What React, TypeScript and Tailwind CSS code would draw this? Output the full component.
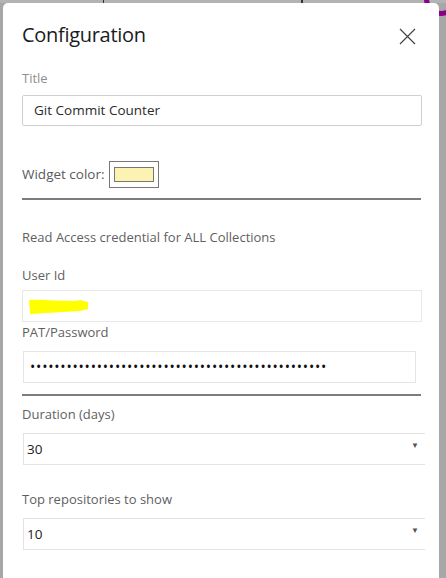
import React from 'react';

const font = { fontFamily: '"Open Sans", "Noto Sans", Arial, sans-serif' };

const Label: React.FC<{ text: string; className?: string }> = ({ text, className }) => (
  <div className={`text-[13px] leading-[18px] text-[#5f5f5f] ${className ?? ''}`}>{text}</div>
);

const SelectBox: React.FC<{ value: string; className?: string }> = ({ value, className }) => (
  <div
    className={`flex items-center justify-between h-[32px] ml-[1px] -mr-[3px] border-t border-l border-b border-[#e3e3e3] pl-[3px] pr-[6px] ${className ?? ''}`}
  >
    <span className="text-[13.5px] text-[#222]">{value}</span>
    <span className="text-[8px] text-[#555] -mt-[8px]">▼</span>
  </div>
);

export default function App() {
  return (
    <div className="relative w-[446px] h-[578px] overflow-hidden bg-[#a7a7a7] pt-[3px] pl-[3px] pr-[7px]" style={font}>
      {/* page behind */}
      <div className="absolute left-0 top-0 w-full h-[3px] bg-[#b3b3b3]" />
      <div className="absolute left-[103px] top-0 w-[1px] h-[5px] bg-[#333]" />
      <div className="absolute left-[301px] top-0 w-[2px] h-[5px] bg-[#333]" />
      <div className="absolute right-[-12px] top-[-18px] w-[34px] h-[34px] rounded-full border-[5px] border-[#8b008b]" />

      {/* panel */}
      <div className="relative h-full bg-white rounded-t-[5px] pl-[19px] pr-[17px] pt-[18px]">
        <div className="flex items-center justify-between">
          <h1 className="text-[20px] leading-[28px] font-medium text-[#1b1b1b] tracking-[-0.3px]">Configuration</h1>
          <svg width="17" height="17" viewBox="0 0 17 17" className="mr-[6px] mt-[2px]">
            <path d="M1 1 L16 16 M16 1 L1 16" stroke="#444" strokeWidth="1.2" fill="none" />
          </svg>
        </div>

        <div className="mt-[20px] text-[13px] leading-[18px] text-[#8f8f8f]">Title</div>
        <div className="mt-[8px] h-[31px] border border-[#cfcfcf] rounded-[2px] flex items-center pl-[11px] text-[13.5px] text-[#2b2b2b]">
          Git Commit Counter
        </div>

        <div className="mt-[35px] flex items-center">
          <span className="text-[13.5px] text-[#5a5a5a]">Widget color:</span>
          <div className="ml-[4px] w-[50px] h-[27px] border border-[#777] flex items-center justify-center">
            <div className="w-[40px] h-[15px] border border-[#777] bg-[#fcf3b3]" />
          </div>
        </div>

        <div className="mt-[10px] h-[2px] bg-[#7c7c7c] mr-[1px]" />

        <Label text="Read Access credential for ALL Collections" className="mt-[28px]" />
        <Label text="User Id" className="mt-[20px]" />

        <div className="mt-[6px] h-[32px] border border-[#e8e8e8] flex items-center pl-[5px]">
          <svg width="62" height="20" viewBox="0 0 62 20" className="mt-[2px]">
            <path d="M1 3 C14 2 30 4 46 4 L52 3 L60 5 L60 12 L52 14 C36 15 18 16 2 17 Z" fill="#ffff00" />
          </svg>
        </div>

        <Label text="PAT/Password" className="mt-[1px]" />
        <div className="mt-[10px] ml-[1px] mr-[6px] h-[32px] border border-[#e5e5e5] flex items-center pl-[6px] text-[#111] overflow-hidden">
          <span className="tracking-[0.8px] text-[14px] leading-none">{'•'.repeat(49)}</span>
        </div>

        <div className="mt-[11px] h-[2px] bg-[#7c7c7c] mr-[1px]" />

        <Label text="Duration (days)" className="mt-[9px]" />
        <SelectBox value="30" className="mt-[10px]" />

        <Label text="Top repositories to show" className="mt-[25px]" />
        <SelectBox value="10" className="mt-[10px]" />
      </div>
    </div>
  );
}
